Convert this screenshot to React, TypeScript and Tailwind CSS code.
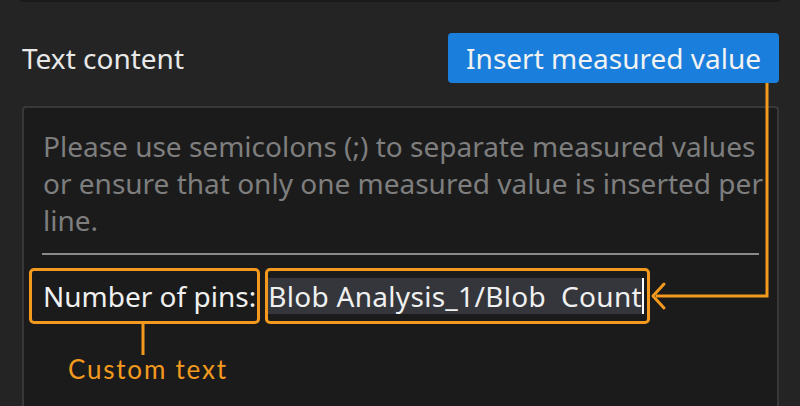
import React from "react";

const ORANGE = "#f39a1e";

function Annotations() {
  return (
    <svg
      className="absolute inset-0 pointer-events-none"
      width={800}
      height={406}
      viewBox="0 0 800 406"
      fill="none"
    >
      {/* arrow from button down to the inserted value */}
      <path d="M767 83 V296 H656" stroke={ORANGE} strokeWidth={3} />
      <path
        d="M664 284 L653 296 L664 308"
        stroke={ORANGE}
        strokeWidth={3}
        strokeLinecap="round"
        strokeLinejoin="round"
      />
      {/* connector to the custom text label */}
      <path d="M143 323 V355" stroke={ORANGE} strokeWidth={3} />
    </svg>
  );
}

export default function App() {
  return (
    <div
      className="relative w-[800px] h-[406px] overflow-hidden bg-[#242424] flex flex-col"
      style={{ fontFamily: '"Noto Sans", "Open Sans", sans-serif' }}
    >
      <div className="mx-[20px] h-[2px] bg-[#1a1a1a]" />

      {/* header row */}
      <div className="flex items-center justify-between pl-[22px] pr-[21px] mt-[31px]">
        <span className="text-[28px] text-[#e8e8e8] leading-none">Text content</span>
        <button className="h-[50px] px-[18px] rounded-[4px] bg-[#1a7fdc] text-[28px] text-[#f2f2f2] leading-none">
          Insert measured value
        </button>
      </div>

      {/* text area */}
      <div className="flex-1 mt-[23px] ml-[22px] mr-[21px] border-2 border-b-0 border-[#383838] rounded-t-[4px] bg-[#1b1b1b] flex flex-col">
        <p className="pl-[19px] pt-[20px] text-[28px] leading-[37px] text-[#7e7e7e] whitespace-nowrap">
          Please use semicolons (;) to separate measured values
          <br />
          or ensure that only one measured value is inserted per
          <br />
          line.
        </p>
        <div className="mt-[14px] mx-[18px] h-[2px] bg-[#8a8a8a]" />

        <div className="flex items-center mt-[13px] ml-[5px] text-[28px] text-[#f0f0f0]">
          <span className="h-[56px] flex items-center pl-[11px] pr-[1px] border-[3px] rounded-[5px] border-[#f39a1e]">
            Number of pins:
          </span>
          <span className="ml-[5px] h-[56px] flex items-center pr-[3px] border-[3px] rounded-[5px] border-[#f39a1e]">
            <span className="h-[36px] flex items-center bg-[#34363c] whitespace-pre tracking-[0.3px] border-r-2 border-white">
              Blob Analysis_1/Blob  Count
            </span>
          </span>
        </div>

        <div
          className="ml-[44px] mt-[32px] text-[26px] tracking-[1.8px] text-[#f39a1e] leading-none"
          style={{ fontFamily: "Lato, sans-serif" }}
        >
          Custom text
        </div>
      </div>

      <Annotations />
    </div>
  );
}
